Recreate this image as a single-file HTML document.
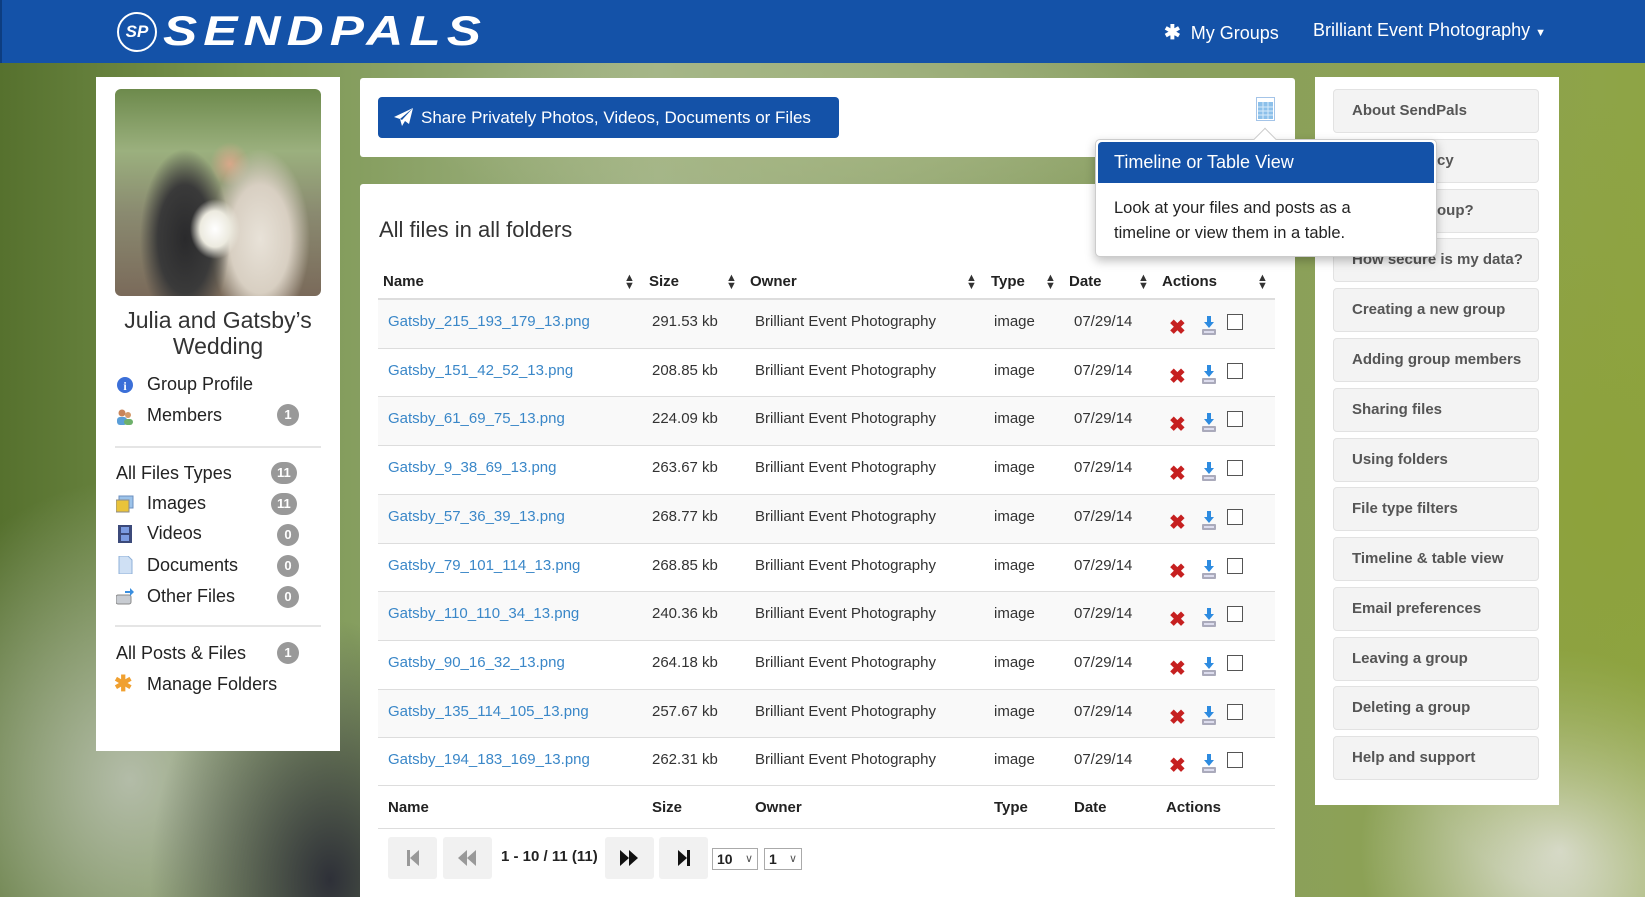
<!DOCTYPE html>
<html><head><meta charset="utf-8"><style>
*{box-sizing:border-box;margin:0;padding:0}
body{width:1645px;height:897px;overflow:hidden;position:relative;font-family:"Liberation Sans",sans-serif;
background:
radial-gradient(ellipse 180px 260px at 330px 880px,#2e3038 0%,rgba(46,48,56,0) 100%),
radial-gradient(ellipse 250px 300px at 130px 780px,#b3bca8 0%,rgba(179,188,168,0) 100%),
radial-gradient(ellipse 260px 400px at 1600px 500px,#8da23b 0%,rgba(141,162,59,0) 100%),
radial-gradient(ellipse 200px 200px at 1560px 850px,#dfe0d8 0%,rgba(223,224,216,0) 100%),
radial-gradient(ellipse 400px 100px at 800px 120px,#a7b784 0%,rgba(167,183,132,0) 100%),
linear-gradient(90deg,#56712e 0%,#7b9650 15%,#a4b58a 40%,#8a9f62 70%,#8ea445 100%);}
.hdr{position:absolute;left:0;top:0;width:1645px;height:63px;background:#1452a8;border-left:2px solid #0d3d80}
.logo{position:absolute;left:115px;top:10px;color:#fff}
.circ{position:absolute;left:0;top:2px;width:40px;height:40px;border:2px solid #fff;border-radius:50%;font:italic bold 17px "Liberation Sans";text-align:center;line-height:36px}
.brand{position:absolute;left:46px;top:-3px;font:italic bold 42px "Liberation Sans",sans-serif;letter-spacing:5px;white-space:nowrap;transform:scaleX(1.22);transform-origin:left}
.nav{position:absolute;top:20px;color:#fff;font-size:18px}
.panel{position:absolute;background:#fff}
.lp{left:96px;top:77px;width:244px;height:674px}
.photo{position:absolute;left:19px;top:12px;width:206px;height:207px;border-radius:6px;
background:radial-gradient(ellipse 25px 30px at 100px 140px,#fff 0%,#eceadf 60%,rgba(0,0,0,0) 100%),radial-gradient(ellipse 45px 90px at 70px 150px,#2a2a2c 0%,#3a3a3a 60%,rgba(0,0,0,0) 100%),radial-gradient(ellipse 50px 90px at 145px 150px,#e8e2d8 0%,#d8cfc2 60%,rgba(0,0,0,0) 100%),radial-gradient(ellipse 20px 22px at 115px 75px,#d8a88a 0%,rgba(216,168,138,0) 100%),linear-gradient(180deg,#6d8a4c 0%,#9bb07e 30%,#8a8a70 60%,#7a6a5a 100%)}
.gt{position:absolute;left:0;width:244px;text-align:center;font-size:23px;color:#333;line-height:26px}
.li{position:absolute;left:51px;font-size:18px;color:#222}
.lt{position:absolute;left:20px;font-size:18px;color:#222}
.ic{position:absolute;left:20px;width:18px;height:18px}
.bd{position:absolute;left:180px;height:22px;min-width:22px;border-radius:11px;background:#999;color:#fff;font:bold 13px "Liberation Sans";text-align:center;line-height:22px;padding:0 6px}
.hr{position:absolute;left:19px;width:206px;height:2px;background:#e5e5e5}
.tp{left:360px;top:78px;width:935px;height:79px;border-radius:3px}
.btn{position:absolute;left:18px;top:19px;width:461px;height:41px;background:#1452a8;border-radius:4px;color:#fff;font-size:17px;line-height:41px;padding-left:43px}
.mp{left:360px;top:184px;width:935px;height:713px;border-radius:3px 3px 0 0}
.ttl{position:absolute;left:19px;top:33px;font-size:22px;color:#333}
.th{position:absolute;top:89px;font-size:15px;font-weight:bold;color:#222}
.srt{position:absolute;top:90px;font-size:11px;color:#333;line-height:8px;width:10px;text-align:center}
.row{position:absolute;left:18px;width:897px;height:49px;border-top:1px solid #ddd}
.row span{position:absolute;top:13px;font-size:15px;color:#333}
.row .nm{color:#3a87c8;left:10px}
.x{position:absolute;left:791px;top:19px;color:#c62020;font-size:20px;font-weight:bold;line-height:18px}
.dl{position:absolute;left:823px;top:16px;width:16px;height:20px}
.cb{position:absolute;left:849px;top:14px;width:16px;height:16px;border:1px solid #555;background:#fff}
.pg{position:absolute;top:653px;height:42px;width:49px;background:#f1f1f1;border-radius:3px}
.sel{position:absolute;top:664px;height:22px;border:1px solid #aaa;font:bold 14px "Liberation Sans";line-height:20px;padding-left:4px;color:#222}
.rp{left:1315px;top:77px;width:244px;height:728px}
.hb{position:absolute;left:18px;width:206px;height:44px;background:#f3f3f3;border:1px solid #e2e2e2;border-radius:4px;font-size:15px;font-weight:bold;color:#555;padding-left:18px;line-height:42px}
.pop{position:absolute;left:1095px;top:139px;width:342px;height:118px;background:#fff;border:1px solid #ccc;border-radius:5px;box-shadow:0 4px 10px rgba(0,0,0,.25)}
.poph{position:absolute;left:2px;top:2px;width:336px;height:41px;background:#1452a8;color:#fff;font-size:18px;line-height:40px;padding-left:16px;border-radius:4px 4px 0 0}
.popb{position:absolute;left:18px;top:56px;font-size:16.5px;color:#222;line-height:25px}
</style></head><body>
<div class="hdr">
<div class="logo"><div class="circ">SP</div><div class="brand">SENDPALS</div></div>
<div class="nav" style="left:1162px"><span style="font-weight:bold;font-size:20px">✱</span>&nbsp; My Groups</div>
<div class="nav" style="left:1311px">Brilliant Event Photography <span style="font-size:11px">▼</span></div>
</div>

<div class="panel lp">
<div class="photo"></div>
<div class="gt" style="top:230px">Julia and Gatsby’s<br>Wedding</div>
<svg class="ic" style="top:299px" viewBox="0 0 18 18"><circle cx="9" cy="9" r="8" fill="#3b6fd8"/><text x="9" y="14" font-size="12" font-weight="bold" fill="#fff" text-anchor="middle" font-family="Liberation Serif">i</text></svg>
<div class="li" style="top:297px">Group Profile</div>
<svg class="ic" style="top:330px" viewBox="0 0 18 18"><circle cx="6" cy="6" r="3.5" fill="#c8845a"/><rect x="1" y="10" width="10" height="8" rx="3" fill="#5a9ed8"/><circle cx="12" cy="8" r="3" fill="#d49a6a"/><rect x="8" y="12" width="9" height="6" rx="3" fill="#6db06a"/></svg>
<div class="li" style="top:328px">Members</div><div class="bd" style="top:327px;left:181px">1</div>
<div class="hr" style="top:369px"></div>
<div class="lt" style="top:386px">All Files Types</div><div class="bd" style="top:385px;left:175px">11</div>
<svg class="ic" style="top:418px" viewBox="0 0 18 18"><rect x="3" y="1" width="14" height="12" fill="#9cc3ea" stroke="#6b8fbf"/><rect x="0" y="5" width="13" height="12" fill="#e9c33a" stroke="#8a8a8a"/></svg>
<div class="li" style="top:416px">Images</div><div class="bd" style="top:416px;left:175px">11</div>
<svg class="ic" style="top:448px" viewBox="0 0 18 18"><rect x="2" y="0" width="14" height="18" fill="#3c4a7a"/><rect x="5" y="2" width="8" height="6" fill="#7b9be0"/><rect x="5" y="10" width="8" height="6" fill="#7b9be0"/></svg>
<div class="li" style="top:446px">Videos</div><div class="bd" style="top:447px;left:181px">0</div>
<svg class="ic" style="top:479px" viewBox="0 0 18 18"><path d="M3 0h9l4 4v14H3z" fill="#cfe0f4" stroke="#8fb0d8"/></svg>
<div class="li" style="top:478px">Documents</div><div class="bd" style="top:478px;left:181px">0</div>
<svg class="ic" style="top:510px" viewBox="0 0 18 18"><rect x="0" y="8" width="15" height="9" rx="2" fill="#c8ccd2" stroke="#888"/><path d="M9 4h5V1l4 4-4 4V6H9z" fill="#3a8fe0"/></svg>
<div class="li" style="top:509px">Other Files</div><div class="bd" style="top:509px;left:181px">0</div>
<div class="hr" style="top:548px"></div>
<div class="lt" style="top:566px">All Posts &amp; Files</div><div class="bd" style="top:565px;left:181px">1</div>
<div style="position:absolute;left:18px;top:594px;color:#f0a030;font-size:22px;font-weight:bold">✱</div>
<div class="li" style="top:597px">Manage Folders</div>
</div>

<div class="panel tp">
<div class="btn"><svg style="position:absolute;left:16px;top:11px" width="20" height="18" viewBox="0 0 20 18"><path d="M19 0L0 9l6 2 2 7 3-5 4 3z M6 11L19 0 8 12z" fill="#fff"/></svg>Share Privately Photos, Videos, Documents or Files</div>
<svg style="position:absolute;left:896px;top:19px" width="19" height="24" viewBox="0 0 19 24"><rect x="0.5" y="0.5" width="18" height="23" fill="#fff" stroke="#4a8ad0" stroke-dasharray="1 1"/><rect x="2" y="5" width="15" height="17" fill="#8cc0ea"/><path d="M2 10h15M2 14h15M2 18h15M7 5v17M12 5v17" stroke="#d6eafa" stroke-width="1"/></svg>
</div>

<div class="panel mp">
<div class="ttl">All files in all folders</div>
<div class="th" style="left:23px">Name</div><div class="srt" style="left:264px">▲<br>▼</div>
<div class="th" style="left:289px">Size</div><div class="srt" style="left:366px">▲<br>▼</div>
<div class="th" style="left:390px">Owner</div><div class="srt" style="left:606px">▲<br>▼</div>
<div class="th" style="left:631px">Type</div><div class="srt" style="left:685px">▲<br>▼</div>
<div class="th" style="left:709px">Date</div><div class="srt" style="left:778px">▲<br>▼</div>
<div class="th" style="left:802px">Actions</div><div class="srt" style="left:897px">▲<br>▼</div>
<div style="position:absolute;left:18px;top:114px;width:897px;height:1px;background:#ddd"></div>

<div class="row" style="top:115px;background:#f9f9f9"><span class="nm">Gatsby_215_193_179_13.png</span><span style="left:274px">291.53 kb</span><span style="left:377px">Brilliant Event Photography</span><span style="left:616px">image</span><span style="left:696px">07/29/14</span><div class="x">✖</div><svg class="dl" viewBox="0 0 16 20"><path d="M6 0h4v6h3l-5 6-5-6h3z" fill="#2d8be0"/><rect x="1" y="13" width="14" height="6" rx="1" fill="#aab" /><rect x="3" y="15" width="10" height="2" fill="#dde"/></svg><div class="cb"></div></div>
<div class="row" style="top:164px"><span class="nm">Gatsby_151_42_52_13.png</span><span style="left:274px">208.85 kb</span><span style="left:377px">Brilliant Event Photography</span><span style="left:616px">image</span><span style="left:696px">07/29/14</span><div class="x">✖</div><svg class="dl" viewBox="0 0 16 20"><path d="M6 0h4v6h3l-5 6-5-6h3z" fill="#2d8be0"/><rect x="1" y="13" width="14" height="6" rx="1" fill="#aab" /><rect x="3" y="15" width="10" height="2" fill="#dde"/></svg><div class="cb"></div></div>
<div class="row" style="top:212px;background:#f9f9f9"><span class="nm">Gatsby_61_69_75_13.png</span><span style="left:274px">224.09 kb</span><span style="left:377px">Brilliant Event Photography</span><span style="left:616px">image</span><span style="left:696px">07/29/14</span><div class="x">✖</div><svg class="dl" viewBox="0 0 16 20"><path d="M6 0h4v6h3l-5 6-5-6h3z" fill="#2d8be0"/><rect x="1" y="13" width="14" height="6" rx="1" fill="#aab" /><rect x="3" y="15" width="10" height="2" fill="#dde"/></svg><div class="cb"></div></div>
<div class="row" style="top:261px"><span class="nm">Gatsby_9_38_69_13.png</span><span style="left:274px">263.67 kb</span><span style="left:377px">Brilliant Event Photography</span><span style="left:616px">image</span><span style="left:696px">07/29/14</span><div class="x">✖</div><svg class="dl" viewBox="0 0 16 20"><path d="M6 0h4v6h3l-5 6-5-6h3z" fill="#2d8be0"/><rect x="1" y="13" width="14" height="6" rx="1" fill="#aab" /><rect x="3" y="15" width="10" height="2" fill="#dde"/></svg><div class="cb"></div></div>
<div class="row" style="top:310px;background:#f9f9f9"><span class="nm">Gatsby_57_36_39_13.png</span><span style="left:274px">268.77 kb</span><span style="left:377px">Brilliant Event Photography</span><span style="left:616px">image</span><span style="left:696px">07/29/14</span><div class="x">✖</div><svg class="dl" viewBox="0 0 16 20"><path d="M6 0h4v6h3l-5 6-5-6h3z" fill="#2d8be0"/><rect x="1" y="13" width="14" height="6" rx="1" fill="#aab" /><rect x="3" y="15" width="10" height="2" fill="#dde"/></svg><div class="cb"></div></div>
<div class="row" style="top:359px"><span class="nm">Gatsby_79_101_114_13.png</span><span style="left:274px">268.85 kb</span><span style="left:377px">Brilliant Event Photography</span><span style="left:616px">image</span><span style="left:696px">07/29/14</span><div class="x">✖</div><svg class="dl" viewBox="0 0 16 20"><path d="M6 0h4v6h3l-5 6-5-6h3z" fill="#2d8be0"/><rect x="1" y="13" width="14" height="6" rx="1" fill="#aab" /><rect x="3" y="15" width="10" height="2" fill="#dde"/></svg><div class="cb"></div></div>
<div class="row" style="top:407px;background:#f9f9f9"><span class="nm">Gatsby_110_110_34_13.png</span><span style="left:274px">240.36 kb</span><span style="left:377px">Brilliant Event Photography</span><span style="left:616px">image</span><span style="left:696px">07/29/14</span><div class="x">✖</div><svg class="dl" viewBox="0 0 16 20"><path d="M6 0h4v6h3l-5 6-5-6h3z" fill="#2d8be0"/><rect x="1" y="13" width="14" height="6" rx="1" fill="#aab" /><rect x="3" y="15" width="10" height="2" fill="#dde"/></svg><div class="cb"></div></div>
<div class="row" style="top:456px"><span class="nm">Gatsby_90_16_32_13.png</span><span style="left:274px">264.18 kb</span><span style="left:377px">Brilliant Event Photography</span><span style="left:616px">image</span><span style="left:696px">07/29/14</span><div class="x">✖</div><svg class="dl" viewBox="0 0 16 20"><path d="M6 0h4v6h3l-5 6-5-6h3z" fill="#2d8be0"/><rect x="1" y="13" width="14" height="6" rx="1" fill="#aab" /><rect x="3" y="15" width="10" height="2" fill="#dde"/></svg><div class="cb"></div></div>
<div class="row" style="top:505px;background:#f9f9f9"><span class="nm">Gatsby_135_114_105_13.png</span><span style="left:274px">257.67 kb</span><span style="left:377px">Brilliant Event Photography</span><span style="left:616px">image</span><span style="left:696px">07/29/14</span><div class="x">✖</div><svg class="dl" viewBox="0 0 16 20"><path d="M6 0h4v6h3l-5 6-5-6h3z" fill="#2d8be0"/><rect x="1" y="13" width="14" height="6" rx="1" fill="#aab" /><rect x="3" y="15" width="10" height="2" fill="#dde"/></svg><div class="cb"></div></div>
<div class="row" style="top:553px"><span class="nm">Gatsby_194_183_169_13.png</span><span style="left:274px">262.31 kb</span><span style="left:377px">Brilliant Event Photography</span><span style="left:616px">image</span><span style="left:696px">07/29/14</span><div class="x">✖</div><svg class="dl" viewBox="0 0 16 20"><path d="M6 0h4v6h3l-5 6-5-6h3z" fill="#2d8be0"/><rect x="1" y="13" width="14" height="6" rx="1" fill="#aab" /><rect x="3" y="15" width="10" height="2" fill="#dde"/></svg><div class="cb"></div></div>
<div class="row" style="top:601px;height:44px;border-bottom:1px solid #ddd">
<span style="left:10px;font-weight:bold;color:#222">Name</span><span style="left:274px;font-weight:bold;color:#222">Size</span><span style="left:377px;font-weight:bold;color:#222">Owner</span><span style="left:616px;font-weight:bold;color:#222">Type</span><span style="left:696px;font-weight:bold;color:#222">Date</span><span style="left:788px;font-weight:bold;color:#222">Actions</span></div>

<div class="pg" style="left:28px"><svg style="position:absolute;left:18px;top:13px" width="14" height="16" viewBox="0 0 14 16"><rect x="1" y="0" width="3" height="16" fill="#999"/><path d="M13 0v16L4 8z" fill="#999"/></svg></div>
<div class="pg" style="left:83px"><svg style="position:absolute;left:14px;top:13px" width="20" height="16" viewBox="0 0 20 16"><path d="M10 0v16L1 8zM19 0v16L10 8z" fill="#999"/></svg></div>
<div style="position:absolute;left:141px;top:664px;font-size:15px;font-weight:bold;color:#222">1 - 10 / 11 (11)</div>
<div class="pg" style="left:245px"><svg style="position:absolute;left:14px;top:13px" width="20" height="16" viewBox="0 0 20 16"><path d="M1 0v16l9-8zM10 0v16l9-8z" fill="#111"/></svg></div>
<div class="pg" style="left:299px"><svg style="position:absolute;left:18px;top:13px" width="14" height="16" viewBox="0 0 14 16"><path d="M1 0v16l9-8z" fill="#111"/><rect x="10" y="0" width="3" height="16" fill="#111"/></svg></div>
<div class="sel" style="left:352px;width:46px">10 <span style="position:absolute;right:4px;font-weight:normal;font-size:11px;color:#555">∨</span></div>
<div class="sel" style="left:404px;width:38px">1 <span style="position:absolute;right:4px;font-weight:normal;font-size:11px;color:#555">∨</span></div>
</div>

<div class="panel rp">
<div class="hb" style="top:12px">About SendPals</div>
<div class="hb" style="top:62px">Group privacy</div>
<div class="hb" style="top:112px">What is a group?</div>
<div class="hb" style="top:161px">How secure is my data?</div>
<div class="hb" style="top:211px">Creating a new group</div>
<div class="hb" style="top:261px">Adding group members</div>
<div class="hb" style="top:311px">Sharing files</div>
<div class="hb" style="top:361px">Using folders</div>
<div class="hb" style="top:410px">File type filters</div>
<div class="hb" style="top:460px">Timeline &amp; table view</div>
<div class="hb" style="top:510px">Email preferences</div>
<div class="hb" style="top:560px">Leaving a group</div>
<div class="hb" style="top:609px">Deleting a group</div>
<div class="hb" style="top:659px">Help and support</div>
</div>

<div class="pop">
<div style="position:absolute;left:161px;top:-9px;width:16px;height:16px;background:#fff;border-left:1px solid #ccc;border-top:1px solid #ccc;transform:rotate(45deg)"></div>
<div class="poph">Timeline or Table View</div>
<div class="popb">Look at your files and posts as a<br>timeline or view them in a table.</div>
</div>
</body></html>
